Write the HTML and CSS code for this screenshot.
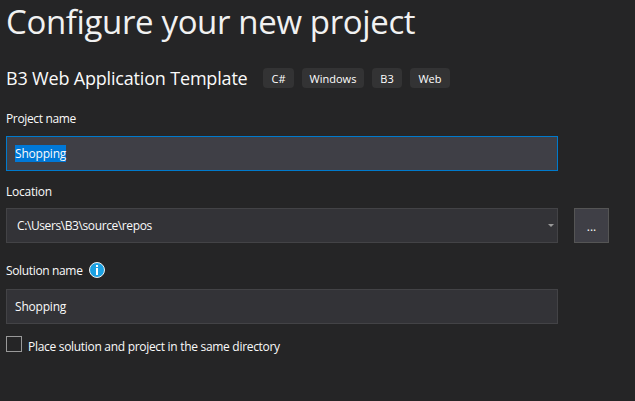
FILE: index.html
```html
<!DOCTYPE html>
<html lang="en">
<head>
<meta charset="utf-8">
<title>Configure your new project</title>
<link rel="stylesheet" href="styles.css">
</head>
<body>
<main class="page">
  <h1 class="title">Configure your new project</h1>
  <div class="template">
    <h2 class="template-name">B3 Web Application Template</h2>
    <ul class="tags">
      <li class="tag tag-cs">C#</li>
      <li class="tag tag-windows">Windows</li>
      <li class="tag tag-b3">B3</li>
      <li class="tag tag-web">Web</li>
    </ul>
  </div>
  <div class="label label-project">Project name</div>
  <div class="field field-active"><span class="selection">Shopping</span></div>
  <div class="label label-location">Location</div>
  <div class="location-row">
    <div class="field combo">
      <span class="path">C:\Users\B3\source\repos</span>
      <svg class="arrow" width="6" height="3" viewBox="0 0 6 3"><path d="M0 0h6L3 3z" fill="#999"/></svg>
    </div>
    <button class="browse" type="button">...</button>
  </div>
  <div class="label label-solution"><span class="label-text">Solution name</span>
    <svg class="info" width="16" height="16" viewBox="0 0 16 16"><circle cx="8" cy="8" r="7.5" fill="#1ba1e2" stroke="#f1f1f1"/><path d="M7 3h2v2H7zM7 6h2v7H7z" fill="#fff"/></svg>
  </div>
  <div class="field field-solution"><span class="value">Shopping</span></div>
  <div class="check-row"><span class="checkbox"></span><span class="check-label">Place solution and project in the same directory</span></div>
</main>
</body>
</html>
```
FILE: styles.css
```css
* { box-sizing: border-box; }
body {
  margin: 0;
  background: #252526;
  color: #fafafa;
  font: 12px/18px "Open Sans", "Noto Sans", sans-serif;
  white-space: nowrap;
}
.page { padding-left: 6px; }
.title {
  margin: 0 0 22px;
  height: 46px;
  font-size: 33px;
  line-height: 43px;
  font-weight: 400;
  letter-spacing: -0.36px;
  color: #f1f1f1;
}
.template { display: flex; height: 20px; }
.template-name {
  margin: 0;
  width: 257px;
  font-size: 18px;
  line-height: 20px;
  font-weight: 400;
  letter-spacing: -0.18px;
}
.tags { display: flex; gap: 8px; margin: 0; padding: 0; list-style: none; }
.tag {
  height: 20px;
  border-radius: 4px;
  background: #333334;
  color: #fff;
  font-size: 11px;
  line-height: 21px;
  text-align: center;
}
.tag-cs { width: 31px; }
.tag-windows { width: 62px; }
.tag-b3 { width: 30px; }
.tag-web { width: 40px; }
.label { height: 18px; letter-spacing: -0.35px; }
.label-project { margin: 22px 0 8px; }
.label-location { margin: 12px 0 7px; letter-spacing: -0.25px; }
.label-solution { display: flex; margin: 19px 0 9px; }
.label-text { width: 83px; }
.field {
  display: flex;
  align-items: center;
  width: 552px;
  height: 35px;
  padding: 0 8px;
  border: 1px solid #434346;
  background: #333337;
  letter-spacing: -0.2px;
}
.field-active { border-color: #007acc; background: #3f3f46; }
.selection { height: 17px; line-height: 17px; background: #0078d7; }
.location-row { display: flex; gap: 16px; }
.combo { justify-content: space-between; padding: 0 3px 0 10px; }
.path { letter-spacing: -0.4px; }
.browse {
  width: 35px;
  height: 35px;
  padding: 2px 0 0;
  border: 1px solid #555;
  background: #3f3f46;
  color: #fafafa;
  font: inherit;
}
.check-row { display: flex; gap: 6px; margin-top: 12px; }
.checkbox { width: 16px; height: 16px; border: 1px solid #999; }
.check-label { margin-top: 2px; letter-spacing: -0.3px; }
```
